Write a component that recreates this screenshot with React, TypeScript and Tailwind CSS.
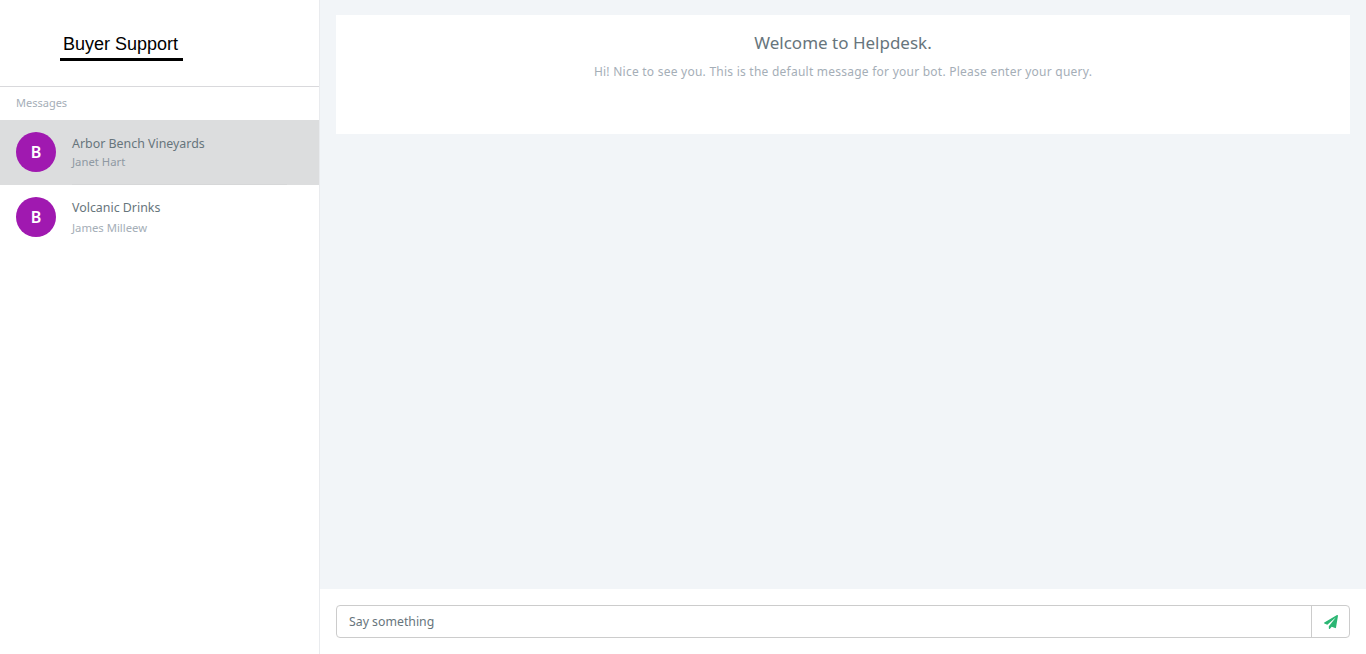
import { FaPaperPlane } from 'react-icons/fa';

const CHATS = [
  { id: 1, title: 'Arbor Bench Vineyards', name: 'Janet Hart', active: true },
  { id: 2, title: 'Volcanic Drinks', name: 'James Milleew', active: false },
];

function ChatRow({ title, name, active }: { title: string; name: string; active: boolean }) {
  return (
    <div className={`flex h-[65px] items-start gap-4 pl-4 pt-3 ${active ? 'bg-[#dcddde]' : 'bg-white'}`}>
      <div className="flex h-10 w-10 shrink-0 items-center justify-center rounded-full bg-[#a019b0] text-[16px] font-semibold text-white">
        B
      </div>
      <div className={`h-[53px] w-[215px] ${active ? 'border-b border-[#d6d7d8]' : ''}`}>
        <div className={`text-[12.4px] leading-[18px] text-[#67757c] ${active ? 'mt-[3px]' : 'mt-[2px]'}`}>{title}</div>
        <div className={`text-[11.3px] leading-4 ${active ? 'mt-[1px] text-[#8f99a3]' : 'mt-[3px] text-[#a5aeb7]'}`}>{name}</div>
      </div>
    </div>
  );
}

export default function App() {
  return (
    <div className="flex h-[654px] w-full overflow-hidden bg-white font-['Noto_Sans',sans-serif]">
      <aside className="w-[320px] shrink-0 border-r border-[#e9ebee] bg-white">
        <div className="flex h-[87px] items-start border-b border-[#d9d9dc] pl-[60px] pt-[33px]">
          <div className="w-[123px] border-b-[3px] border-black pb-[2px] pl-[3px] font-['Liberation_Sans',sans-serif] text-lg leading-[23px] text-black">
            Buyer Support
          </div>
        </div>
        <div className="flex h-[33px] items-center pb-[1px] pl-4 text-[11px] text-[#a5aeb7]">Messages</div>
        {CHATS.map((c) => (
          <ChatRow key={c.id} title={c.title} name={c.name} active={c.active} />
        ))}
      </aside>

      <main className="flex min-w-0 flex-1 flex-col">
        <div className="flex-1 bg-[#f2f5f8] px-4 pt-[15px]">
          <div className="h-[119px] bg-white pt-[16px] text-center">
            <div className="text-[17px] leading-6 text-[#67757c]">Welcome to Helpdesk.</div>
            <div className="mt-[8px] text-xs leading-[18px] tracking-[0.24px] text-[#a5aeb7]">
              Hi! Nice to see you. This is the default message for your bot. Please enter your query.
            </div>
          </div>
        </div>
        <div className="flex h-[65px] shrink-0 items-start bg-white px-4 pt-4">
          <div className="flex h-[33px] w-full rounded border border-[#cccccc]">
            <div className="flex flex-1 items-center pl-3 pt-[1px] text-[12.3px] text-[#67757c]">Say something</div>
            <div className="flex w-[38px] items-center justify-center border-l border-[#cccccc]">
              <FaPaperPlane className="text-[14px] text-[#2bb673]" />
            </div>
          </div>
        </div>
      </main>
    </div>
  );
}
